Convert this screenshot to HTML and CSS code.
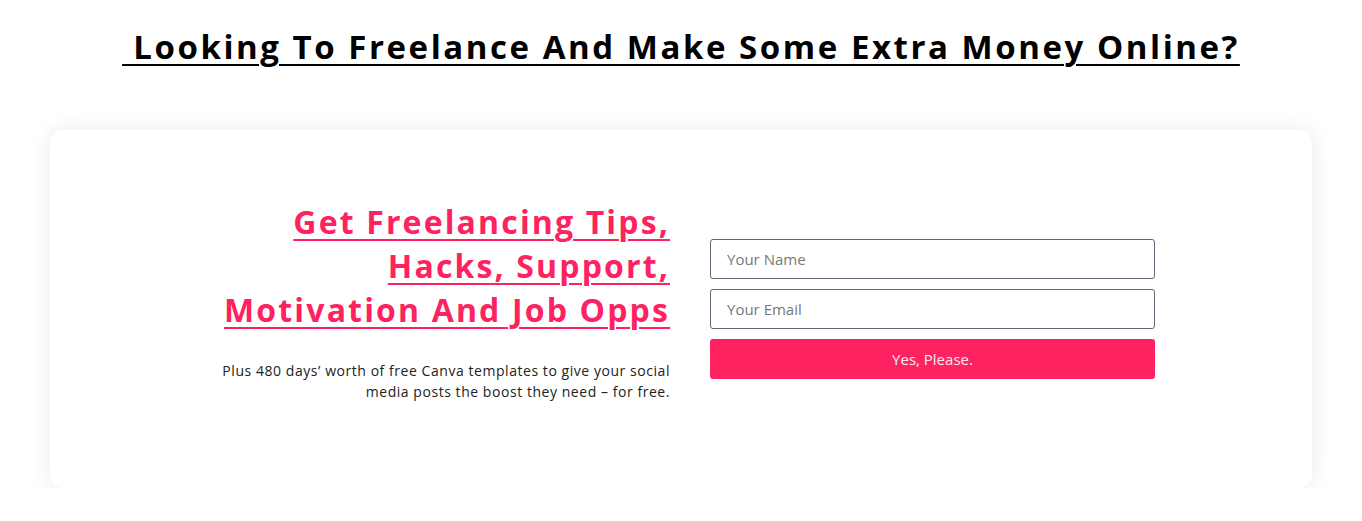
FILE: index.html
```html
<!DOCTYPE html>
<html>
<head>
    <meta charset="UTF-8">
    <title>Freelancing Tips</title>
    <link rel="stylesheet" href="styles.css">
</head>
<body>
    <h1 class="page-title"><a href="#">&nbsp;Looking To Freelance And Make Some Extra Money Online?</a></h1>

    <div class="optin-card">
        <div class="optin-copy">
            <h2 class="optin-heading"><a href="#">Get Freelancing Tips,<br>Hacks, Support,<br>Motivation And Job Opps</a></h2>
            <p class="optin-text">Plus 480 days’ worth of free Canva templates to give your social media posts the boost they need – for free.</p>
        </div>
        <form class="optin-form">
            <input type="text" placeholder="Your Name" />
            <input type="email" placeholder="Your Email" />
            <button type="button">Yes, Please.</button>
        </form>
    </div>
</body>
</html>
```

FILE: styles.css
```css
body {
    margin: 0;
    background: #fff;
    font-family: "Open Sans", sans-serif;
    color: #111;
}
.page-title {
    margin: 0;
    padding-top: 25px;
    text-align: center;
    font-size: 33px;
    font-weight: 700;
    line-height: 44px;
    letter-spacing: 2.55px;
}
.page-title a {
    color: #000;
    text-decoration: underline;
    text-decoration-thickness: 2px;
    text-underline-offset: 5px;
}
.optin-card {
    margin: 61px 50px 0;
    height: 358px;
    background: #fff;
    border-radius: 14px;
    box-shadow: 0 0 22px rgba(0,0,0,0.09);
    display: grid;
    grid-template-columns: 450px 445px;
    column-gap: 40px;
    justify-content: center;
    align-content: center;
    padding-left: 13px;
    box-sizing: border-box;
}
.optin-copy {
    text-align: right;
    padding-bottom: 16px;
}
.optin-heading {
    margin: 0;
    font-size: 32px;
    line-height: 44px;
    font-weight: 700;
    letter-spacing: 2.15px;
    white-space: nowrap;
}
.optin-heading a {
    color: #ff2260;
    text-decoration: underline;
    text-decoration-thickness: 2px;
    text-underline-offset: 5px;
}
.optin-text {
    margin: 28px 0 0;
    font-size: 14px;
    line-height: 21px;
    letter-spacing: 0.55px;
    color: #222;
}
.optin-form {
    display: flex;
    flex-direction: column;
    gap: 10px;
    align-self: center;
}
.optin-form input {
    height: 40px;
    box-sizing: border-box;
    border: 1px solid #5e6775;
    border-radius: 3px;
    padding: 0 16px;
    font-family: inherit;
    font-size: 15px;
    color: #333;
}
.optin-form input::placeholder {
    color: #777;
}
.optin-form button {
    height: 40px;
    border: none;
    border-radius: 3px;
    background: #ff2260;
    color: #fde8ee;
    font-family: inherit;
    font-size: 15px;
    cursor: pointer;
}
```
